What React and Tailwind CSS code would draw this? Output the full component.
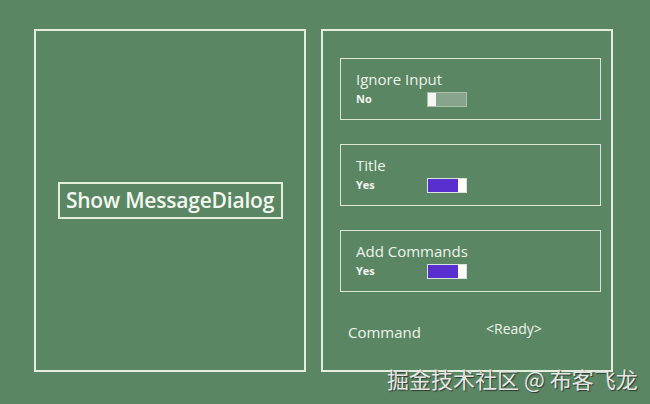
const font = { fontFamily: '"Open Sans", "Noto Sans", sans-serif' };

const Toggle = ({ on }) =>
  on ? (
    <div className="flex h-[15px] w-[40px] border border-[#d8e4dc] bg-white">
      <div className="h-full w-[30px] bg-[#5a2fd0]" />
    </div>
  ) : (
    <div className="flex h-[15px] w-[40px] border border-[#a9c0ad] bg-[#87a58d]">
      <div className="h-full w-[8px] bg-[#f4f7f2]" />
    </div>
  );

const OptionBox = ({ title, value, on }) => (
  <div className="h-[62px] w-[261px] border border-[#d9e6d9] pl-[15px] pt-[10px]">
    <div className="text-[15px] leading-[20px] text-[#eef4ea]">{title}</div>
    <div className="mt-[2px] flex items-center">
      <span className="w-[71px] text-[11px] font-bold text-[#f3f7f0]">{value}</span>
      <Toggle on={on} />
    </div>
  </div>
);

export default function App() {
  return (
    <div
      className="relative flex h-[404px] w-[650px] gap-[15px] bg-[#5a8664] pl-[34px] pt-[29px]"
      style={font}
    >
      {/* left panel */}
      <div className="flex h-[343px] w-[272px] items-center justify-center border-2 border-[#e3eedd]">
        <button className="h-[37px] w-[225px] whitespace-nowrap border-2 border-[#e3eedd] text-[21px] font-semibold tracking-[-0.2px] text-[#f3f7ef]">
          Show MessageDialog
        </button>
      </div>

      {/* right panel */}
      <div className="flex h-[343px] w-[292px] flex-col border-2 border-[#e3eedd] pl-[17px] pt-[27px]">
        <div className="flex flex-col gap-[24px]">
          <OptionBox title="Ignore Input" value="No" on={false} />
          <OptionBox title="Title" value="Yes" on />
          <OptionBox title="Add Commands" value="Yes" on />
        </div>
        <div className="mt-[26px] flex items-start pl-[8px]">
          <span className="mt-[3px] w-[138px] text-[15px] text-[#eef4ea]">Command</span>
          <span className="text-[14px] text-[#eef4ea]">&lt;Ready&gt;</span>
        </div>
      </div>

      {/* watermark */}
      <div
        className="absolute left-[387px] top-[362px] text-[22px] text-[#e4e6e4] [text-shadow:1px_1px_1px_#2b3a30]"
        style={{ fontFamily: '"Noto Sans CJK SC", "Noto Sans", sans-serif' }}
      >
        掘金技术社区 @ 布客飞龙
      </div>
    </div>
  );
}
